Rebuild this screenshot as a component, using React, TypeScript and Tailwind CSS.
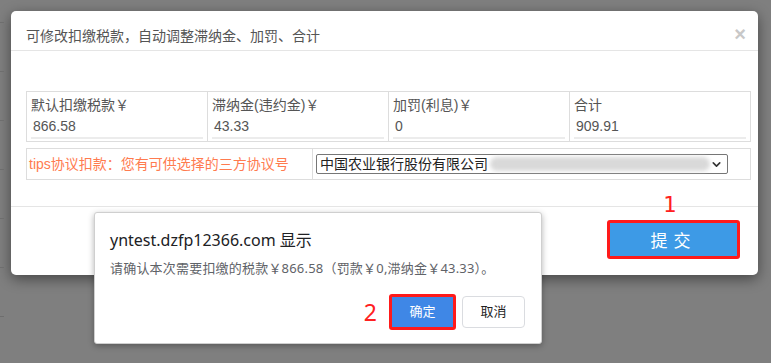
import { ChevronDown } from 'lucide-react';

const CELLS = [
  { label: '默认扣缴税款￥', value: '866.58' },
  { label: '滞纳金(违约金)￥', value: '43.33' },
  { label: '加罚(利息)￥', value: '0' },
  { label: '合计', value: '909.91' },
];

const TICKS = [22, 71, 120, 169, 218, 267, 316];

function TaxCell({ label, value, last }: { label: string; value: string; last?: boolean }) {
  return (
    <div className={`flex-1 px-[4px] pt-[3px] ${last ? '' : 'border-r border-[#dddddd]'}`}>
      <div className="text-[14px] leading-[20px] text-[#555]">{label}</div>
      <div className="h-[24px] border-b-[2px] border-[#ececec] pl-[2px] text-[14px] leading-[22px] text-[#555]">
        {value}
      </div>
    </div>
  );
}

export default function App() {
  return (
    <div
      className="relative w-[771px] h-[363px] overflow-hidden bg-[#7f7f7f] pt-[11px] pl-[11px]"
      style={{ fontFamily: '"Liberation Sans", "Noto Sans CJK SC", sans-serif' }}
    >
      {/* leftover marks of the page under the overlay */}
      {TICKS.map((t) => (
        <div key={t} className="absolute left-0 h-px w-[4px] bg-[#6e6e6e]" style={{ top: t }} />
      ))}

      <div className="flex w-[747px] h-[264px] flex-col rounded-[5px] bg-white shadow-[0_4px_14px_rgba(0,0,0,0.45)]">
        <div className="flex items-center justify-between border-b border-[#e5e5e5] pl-[15px] pr-[12px] pt-[15px] pb-[4px]">
          <span className="text-[14px] leading-[20px] text-[#555]">可修改扣缴税款，自动调整滞纳金、加罚、合计</span>
          <span className="-mt-[4px] text-[20px] font-bold leading-[20px] text-[#c8c8c8]">×</span>
        </div>

        <div className="flex flex-col gap-[6px] pl-[15px] pt-[40px] pb-[26px]">
          <div className="flex w-[725px] h-[51px] border border-[#dddddd]">
            {CELLS.map((c, i) => (
              <TaxCell key={c.label} label={c.label} value={c.value} last={i === CELLS.length - 1} />
            ))}
          </div>
          <div className="flex w-[725px] h-[32px] border border-[#dddddd]">
            <div className="flex w-[286px] items-center border-r border-[#dddddd] pl-[2px] text-[14px] text-[#ff7b4f]">
              tips协议扣款：您有可供选择的三方协议号
            </div>
            <div className="flex flex-1 items-center pl-[3px]">
              <div className="flex h-[20px] w-[412px] items-center rounded-[2px] border border-[#767676] pl-[3px] pr-[4px]">
                <span className="text-[14px] leading-[18px] text-[#222]">中国农业银行股份有限公司</span>
                <span className="ml-[2px] h-[14px] w-[220px] rounded-full bg-[#d9d9d9] blur-[2px]" />
                <ChevronDown className="ml-auto h-[13px] w-[13px] text-[#333]" strokeWidth={3} />
              </div>
            </div>
          </div>
        </div>

        <div className="flex flex-1 justify-end border-t border-[#e5e5e5] pr-[18px] pt-[13px]">
          <button
            type="button"
            className="h-[39px] w-[133px] rounded-[3px] border-[3px] border-[#ff1a1a] bg-[#3d9ae6] text-[17px] tracking-[6px] text-white"
            style={{ fontFamily: '"Noto Sans CJK SC", sans-serif' }}
          >
            提交
          </button>
        </div>
      </div>

      <span
        className="absolute left-[663px] top-[192px] text-[22px] leading-[26px] text-[#ff2020]"
        style={{ fontFamily: '"DejaVu Sans Mono", monospace' }}
      >
        1
      </span>

      <div
        className="absolute left-[94px] top-[212px] flex h-[132px] w-[448px] flex-col rounded-[3px] border border-[#cfcfcf] bg-white shadow-[0_2px_6px_rgba(0,0,0,0.3)]"
        style={{ fontFamily: '"Noto Sans", "Noto Sans CJK SC", sans-serif' }}
      >
        <div className="pl-[15px] pt-[16px] text-[16px] leading-[22px] text-[#202124]">yntest.dzfp12366.com 显示</div>
        <div className="pl-[15px] pt-[8px] text-[13px] leading-[18px] tracking-[0.2px] text-[#5f6368]">
          请确认本次需要扣缴的税款￥866.58（罚款￥0,滞纳金￥43.33）。
        </div>
        <div className="mt-auto flex items-center justify-end gap-[6px] pr-[16px] pb-[13px]">
          <span className="mr-[6px] text-[23px] leading-[26px] text-[#ff2020]">2</span>
          <button
            type="button"
            className="h-[36px] w-[67px] rounded-[3px] border-[3px] border-[#ff1a1a] bg-[#3f87e6] text-[13px] text-white"
          >
            确定
          </button>
          <button
            type="button"
            className="h-[32px] w-[63px] rounded-[4px] border border-[#dadce0] bg-white text-[13px] text-[#1f1f1f]"
          >
            取消
          </button>
        </div>
      </div>
    </div>
  );
}
